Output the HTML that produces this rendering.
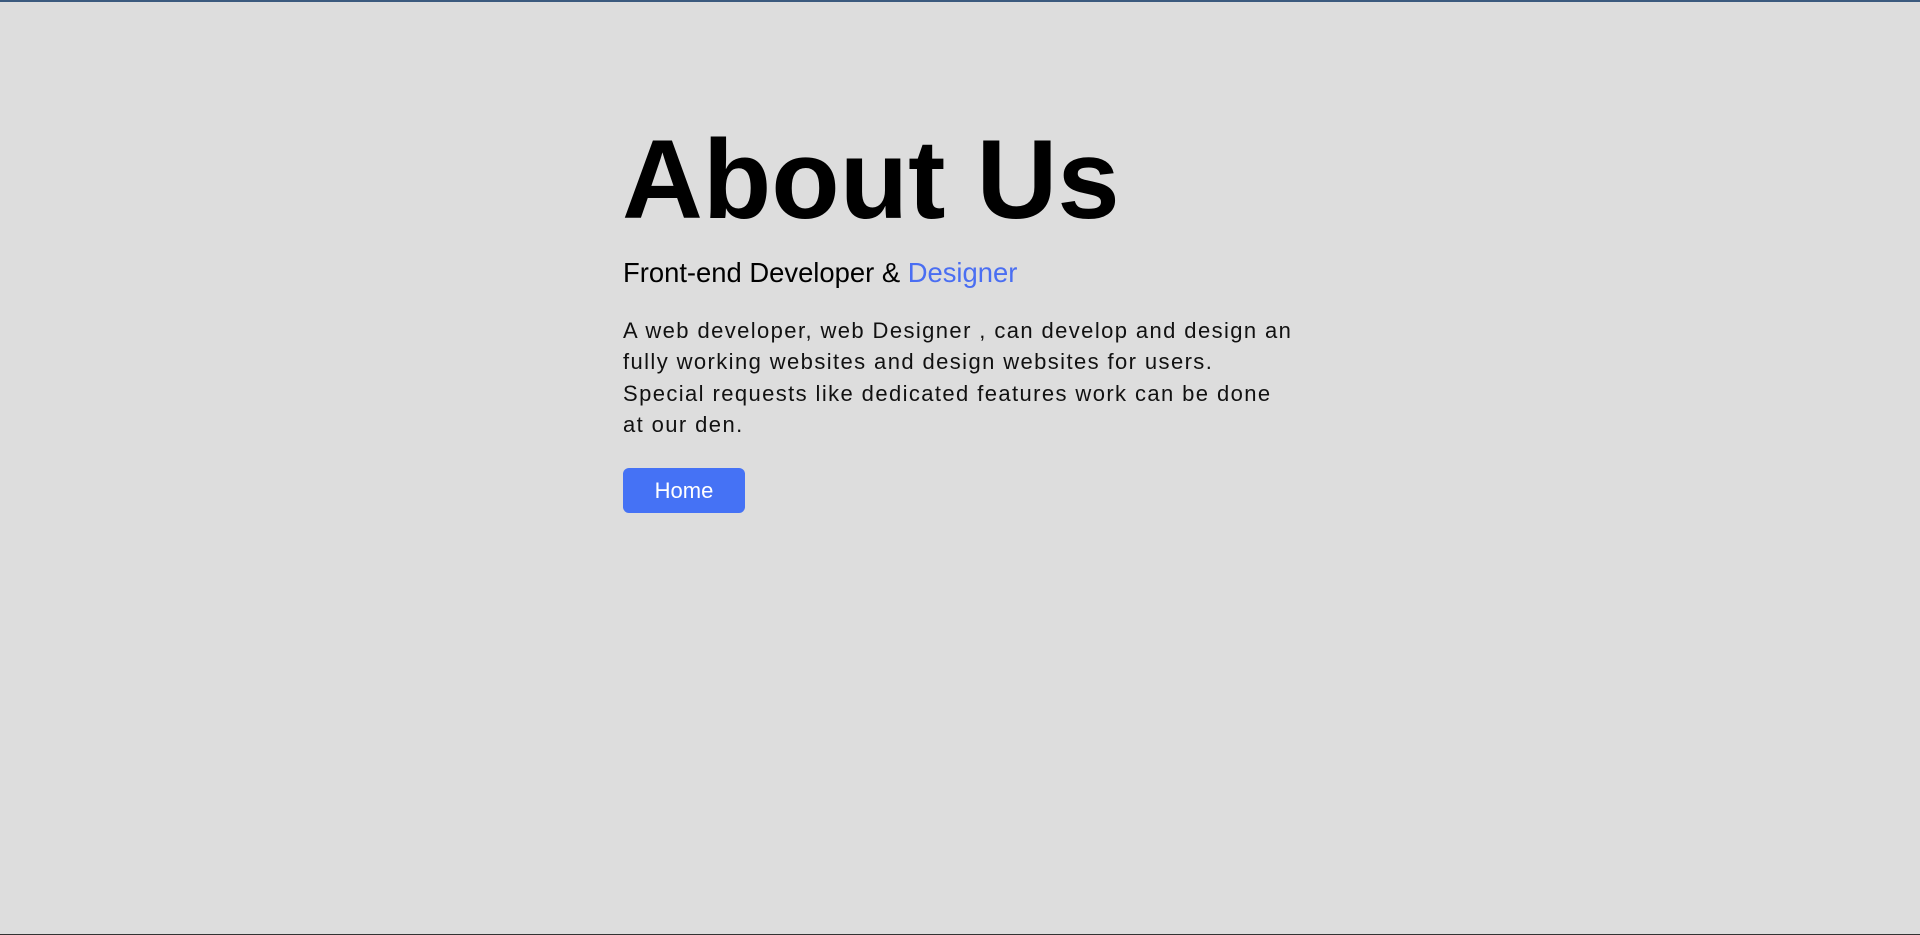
<!DOCTYPE html>
<html><head><meta charset="utf-8"><style>
html,body{margin:0;padding:0}
body{width:1920px;height:935px;background:#dddddd;font-family:"Liberation Sans",Arial,sans-serif;position:relative;overflow:hidden;border-top:2px solid #3b5a7e;box-sizing:border-box}
.b{position:absolute;left:0;right:0;bottom:0;height:1px;background:#333}
h1{position:absolute;left:622px;top:122px;margin:0;font-size:112px;line-height:112px;font-weight:bold;color:#000}
.sub{position:absolute;left:623px;top:257px;font-size:27.4px;line-height:27px;color:#000}
.sub span{color:#4a6ef2}
.p{position:absolute;left:623px;top:313px;font-size:22px;line-height:31.4px;letter-spacing:1.4px;color:#111;white-space:nowrap}
.btn{position:absolute;left:623px;top:466px;width:122px;height:45px;background:#4572f5;border-radius:6px;color:#fff;font-size:22px;line-height:45px;text-align:center}
</style></head><body>
<h1>About Us</h1>
<div class="sub">Front-end Developer &amp; <span>Designer</span></div>
<div class="p">A web developer, web Designer , can develop and design an<br>fully working websites and design websites for users.<br>Special requests like dedicated features work can be done<br>at our den.</div>
<div class="btn">Home</div>
<div class="b"></div>
</body></html>
